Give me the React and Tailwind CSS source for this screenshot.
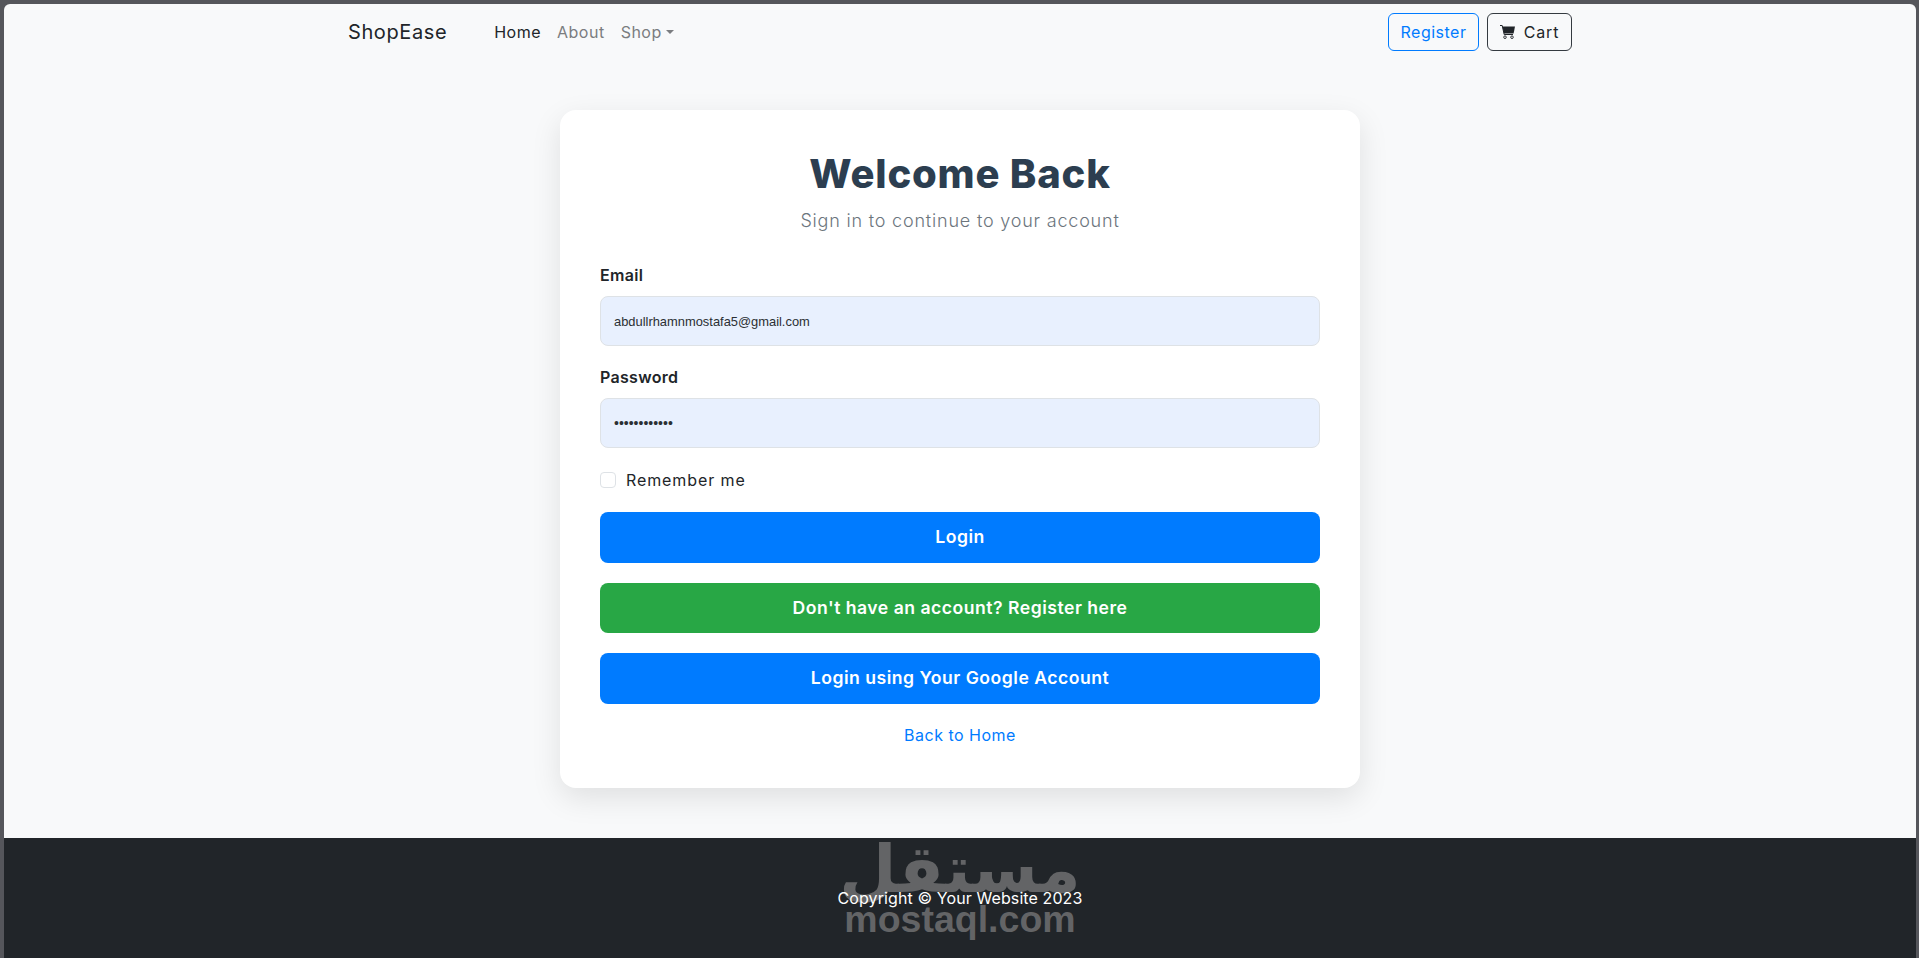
const FONT = "font-['Inter','Noto_Sans',sans-serif]";

function CartIcon() {
  return (
    <svg viewBox="0 0 15 14" className="w-[15px] h-[14px]" fill="none" stroke="#212529">
      <path d="M0 0.5H2.2L4.2 9.5H13" />
      <path d="M2.4 1.5H15L13.6 8.5H4Z" fill="#212529" stroke="none" />
      <circle cx="5" cy="12.2" r="1.3" strokeWidth="0.9" />
      <circle cx="12" cy="12.2" r="1.3" strokeWidth="0.9" />
    </svg>
  );
}

function Field({ label, type, value, inputFont }) {
  return (
    <div className="mb-[20px]">
      <label className="block mb-[8px] text-[16px] leading-[22px] pb-[2px] font-semibold tracking-[0.3px] text-[#212529]">{label}</label>
      <input
        type={type}
        readOnly
        defaultValue={value}
        className={`block w-full h-[50px] px-[13px] bg-[#e8f0fe] border border-[#dee2e6] rounded-[8px] text-[#2b2f33] font-['Liberation_Sans',sans-serif] outline-none ${inputFont}`}
      />
    </div>
  );
}

function WideButton({ color, height, children }) {
  return (
    <button className={`block w-full rounded-[8px] text-white text-[17.6px] font-semibold tracking-[0.5px] ${height} ${color}`}>
      {children}
    </button>
  );
}

export default function App() {
  return (
    <div className={`bg-[#55565b] pt-[4px] pl-[4px] pr-[3px] h-[958px] overflow-hidden ${FONT}`}>
      <div className="h-full flex flex-col bg-[#f8f9fa] rounded-t-[6px] overflow-hidden">
        {/* Navbar */}
        <nav className="h-[56px] shrink-0">
          <div className="w-[1224px] mx-auto flex items-center h-full">
            <a className="text-[20px] tracking-[0.6px] text-[#212529] mr-[47px]">ShopEase</a>
            <a className="text-[16px] tracking-[0.5px] text-[#212529] mr-[16px]">Home</a>
            <a className="text-[16px] tracking-[0.5px] text-[#7b7d80] mr-[16px]">About</a>
            <a className="text-[16px] tracking-[0.5px] text-[#7b7d80] flex items-center">
              Shop
              <span className="ml-[4px] border-x-[4px] border-x-transparent border-t-[4px] border-t-[#7b7d80]" />
            </a>
            <div className="ml-auto flex gap-[8px]">
              <button className="h-[38px] w-[91px] rounded-[6px] border border-[#007bff] text-[#007bff] text-[16px] tracking-[0.5px]">Register</button>
              <button className="h-[38px] w-[85px] rounded-[6px] border border-[#343a40] text-[#212529] text-[16px] tracking-[0.8px] flex items-center justify-center gap-[9px]">
                <CartIcon />
                Cart
              </button>
            </div>
          </div>
        </nav>

        {/* Login card */}
        <main className="flex-1 flex justify-center pt-[50px]">
          <div className="w-[800px] h-[678px] bg-white rounded-[16px] p-[40px] shadow-[0_10px_30px_rgba(0,0,0,0.1)]">
            <div className="text-center mb-[30px]">
              <h1 className="text-[40px] leading-[48px] font-extrabold tracking-[0.8px] text-[#2c3e50]">Welcome Back</h1>
              <p className="mt-[10px] text-[18px] leading-[26px] font-light tracking-[0.8px] text-[#6c757d]">Sign in to continue to your account</p>
            </div>
            <Field label="Email" type="email" value="abdullrhamnmostafa5@gmail.com" inputFont="text-[12.9px]" />
            <Field label="Password" type="password" value="abdullrhamn1" inputFont="text-[14px]" />
            <label className="flex items-center h-[24px] mb-[20px] text-[16px] tracking-[0.9px] text-[#212529]">
              <span className="w-[16px] h-[16px] mr-[10px] bg-white border border-[#dee2e6] rounded-[4px]" />
              Remember me
            </label>
            <div className="flex flex-col gap-[20px]">
              <WideButton color="bg-[#007bff]" height="h-[51px]">Login</WideButton>
              <WideButton color="bg-[#28a745]" height="h-[50px]">Don't have an account? Register here</WideButton>
              <WideButton color="bg-[#007bff]" height="h-[51px]">Login using Your Google Account</WideButton>
            </div>
            <div className="text-center mt-[20px] text-[16px] leading-[22px] tracking-[0.5px] text-[#007bff]">
              <a>Back to Home</a>
            </div>
          </div>
        </main>

        {/* Footer */}
        <footer className="relative h-[120px] shrink-0 bg-[#212529] overflow-hidden flex items-center justify-center">
          {/* Site watermark */}
          <div className="absolute left-0 right-0 top-0 flex flex-col items-center text-[#636466] font-bold">
            <span dir="rtl" className="font-['DejaVu_Sans',sans-serif] text-[66px] leading-[64px]">مستقل</span>
            <span className="font-['Liberation_Sans',sans-serif] text-[37.5px] leading-[34px]">mostaql.com</span>
          </div>
          <p className="relative z-10 text-[16px] tracking-[0.1px] text-white">Copyright © Your Website 2023</p>
        </footer>
      </div>
    </div>
  );
}
